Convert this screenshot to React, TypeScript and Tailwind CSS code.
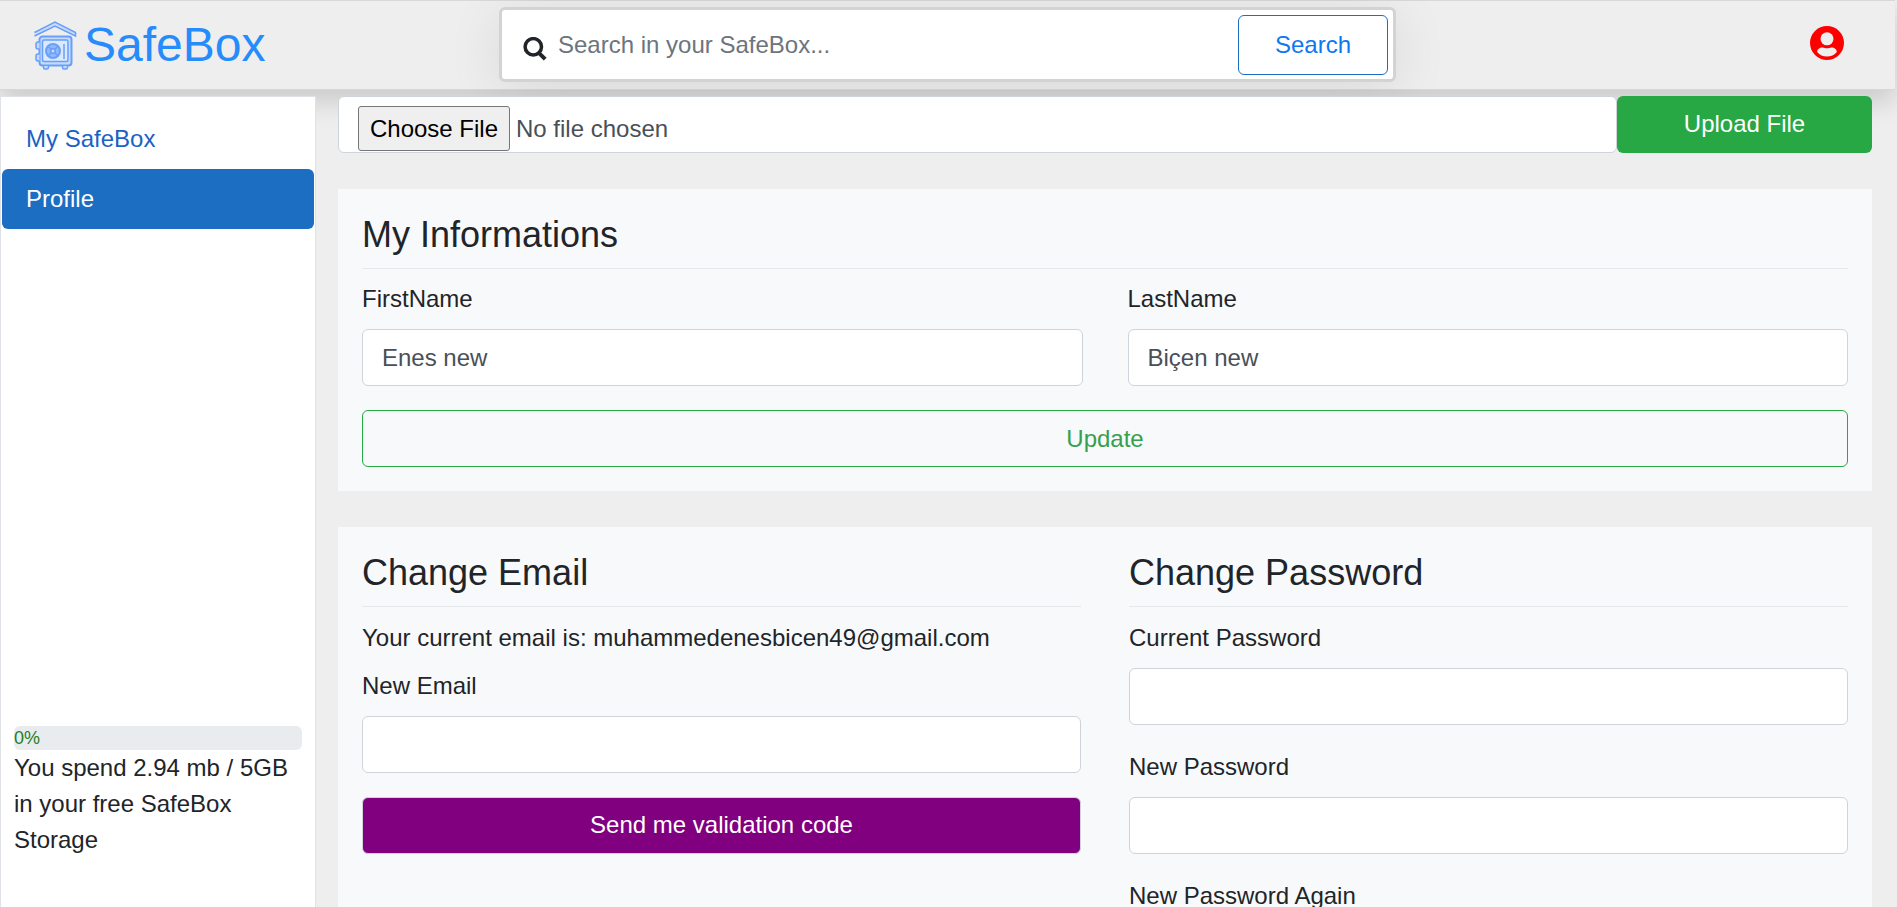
import type { ReactNode } from 'react';

function SafeLogo() {
  return (
    <svg className="h-[50px] w-11 shrink-0" viewBox="0 0 44 50" fill="none" stroke="#6a9ff8" strokeWidth="1.5">
      <path d="M1.500 12.500 22 2l20.500 10.500V16L22 6 1.500 16" fill="#c9deff" />
      <path d="M9.500 16.500h26a3 3 0 0 1 3 3v23a3 3 0 0 1-3 3h-26a3 3 0 0 1-3-3v-23a3 3 0 0 1 3-3Z" fill="#c4dbff" strokeWidth="2" />
      <rect x="9.500" y="20" width="25.500" height="21.500" rx="1.500" fill="#dbe9ff" />
      <circle cx="20" cy="31" r="7" fill="#8fb9fd" strokeWidth="2" />
      <circle cx="20" cy="31" r="2.300" fill="#c4dbff" />
      <path d="m15.200 26.200 3 3m3.600 3.600 3 3m0-9.600-3 3m-3.600 3.600-3 3M31 24v15" />
      <path d="M6.500 22H5a2 2 0 0 0-2 2v3a2 2 0 0 0 2 2h1.500M6.500 34H5a2 2 0 0 0-2 2v3a2 2 0 0 0 2 2h1.500M10.500 46v1.500a1.500 1.500 0 0 0 1.500 1.500h2a1.500 1.500 0 0 0 1.500-1.500V46m14 0v1.500a1.500 1.500 0 0 0 1.500 1.500h2a1.500 1.500 0 0 0 1.500-1.500V46" fill="#c4dbff" />
    </svg>
  );
}

function SearchIcon() {
  return (
    <svg className="mt-2 size-6 shrink-0" viewBox="0 0 24 24" fill="none" stroke="#212529">
      <circle cx="10.300" cy="9.800" r="8.200" strokeWidth="3.500" />
      <path d="m15.800 15.800 6.400 6.400" strokeWidth="4" />
    </svg>
  );
}

function UserIcon() {
  return (
    <svg className="mb-1 ml-auto mr-[51px] size-[34px]" viewBox="0 0 34 34">
      <circle cx="17" cy="17" r="17" fill="#ff0000" />
      <circle cx="17" cy="12.800" r="6.500" fill="#eee" />
      <path d="M7.200 26c0-3 2.500-4.600 5.300-4.600 2 0 2.500.8 4.500.8s2.500-.8 4.500-.8c2.800 0 5.300 1.600 5.300 4.600-2.300 3-6 4.500-9.800 4.500S9.500 29 7.200 26Z" fill="#eee" />
    </svg>
  );
}

function Header() {
  return (
    <header className="relative flex h-[90px] w-[1895px] items-center border-y border-[#d8d8d8] bg-[#eee] shadow-[0_12px_24px_rgba(0,0,0,0.15)]">
      <a className="flex w-[499px] items-center pl-[33px] text-[#268cfb]">
        <SafeLogo />
        <span className="pl-[7px] text-[48px] leading-[72px]">SafeBox</span>
      </a>
      <form className="mb-px flex h-[75px] w-[897px] items-center rounded-md border-[3px] border-[#d3d3d3] bg-white pl-[21px] pr-[5px] shadow-[0_8px_56px_rgba(0,0,0,0.09)]">
        <SearchIcon />
        <span className="grow pl-[11px] text-[#6c757d]">Search in your SafeBox...</span>
        <button className="h-[60px] w-[150px] rounded-md border border-[#1b6ec2] text-[#0d78f2]">Search</button>
      </form>
      <UserIcon />
    </header>
  );
}

function Sidebar() {
  return (
    <aside className="relative mt-1.5 flex w-[316px] shrink-0 flex-col border border-b-0 border-[#dee2e6] bg-white px-px pt-3">
      <a className="h-[60px] px-6 leading-[60px] text-[#1b62c4]">My SafeBox</a>
      <a className="h-[60px] rounded-md bg-[#1b6ec2] px-6 leading-[60px] text-white">Profile</a>
      <div className="mt-[497px] px-3">
        <div className="h-6 rounded-md bg-[#e9ecef] text-lg leading-6 text-[#1e7e1e]">0%</div>
        <p>You spend 2.94 mb / 5GB in your free SafeBox Storage</p>
      </div>
    </aside>
  );
}

function Title({ children }: { children: ReactNode }) {
  return (
    <h2 className="h-14 border-b border-[#e6e9eb] text-[36px] leading-[43px]">{children}</h2>
  );
}

function Field({ label, value = '' }: { label: string; value?: string }) {
  return (
    <label className="block">
      <span className="mb-3 block">{label}</span>
      <span className="block h-[57px] rounded-md border border-[#ced4da] bg-white px-[19px] leading-[55px] text-[#495057]">{value}</span>
    </label>
  );
}

function Main() {
  return (
    <main className="relative ml-[22px] mt-1.5 w-[1534px]">
      <div className="flex h-[57px]">
        <div className="flex h-[57px] w-[1279px] items-start rounded-md border border-[#ced4da] bg-white pl-[19px] pt-[9px] text-[#495057]">
          <button className="h-[45px] w-[152px] shrink-0 rounded-[3px] border border-[#767676] bg-[#efefef] text-black">Choose File</button>
          <span className="pl-[6px] leading-[45px]">No file chosen</span>
        </div>
        <button className="h-[57px] w-[255px] rounded-md bg-[#28a745] pb-0.5 text-white">Upload File</button>
      </div>
      <section className="mt-9 h-[302px] bg-[#f8f9fa] px-6 pt-6">
        <Title>My Informations</Title>
        <div className="mt-3 grid grid-cols-2 gap-[45px]">
          <Field label="FirstName" value="Enes new" />
          <Field label="LastName" value="Biçen new" />
        </div>
        <button className="mt-6 h-[57px] w-full rounded-md border border-[#28a745] text-[#35a04d]">Update</button>
      </section>
      <section className="mt-9 grid h-[500px] grid-cols-2 gap-12 bg-[#f8f9fa] px-6 pt-6">
        <div>
          <Title>Change Email</Title>
          <p className="mb-3 mt-[13px]">Your current email is: muhammedenesbicen49@gmail.com</p>
          <Field label="New Email" />
          <button className="mt-6 h-[57px] w-full rounded-md border border-[#ced4da] bg-[#800080] pb-0.5 text-white">Send me validation code</button>
        </div>
        <div>
          <Title>Change Password</Title>
          <div className="mt-[13px] flex flex-col gap-6">
            <Field label="Current Password" />
            <Field label="New Password" />
            <Field label="New Password Again" />
          </div>
        </div>
      </section>
    </main>
  );
}

export default function App() {
  return (
    <div className="h-[907px] overflow-hidden bg-[#eee] font-['Liberation_Sans',Arial,sans-serif] text-2xl leading-9 text-[#212529]">
      <Header />
      <div className="flex h-[817px]">
        <Sidebar />
        <Main />
      </div>
    </div>
  );
}
